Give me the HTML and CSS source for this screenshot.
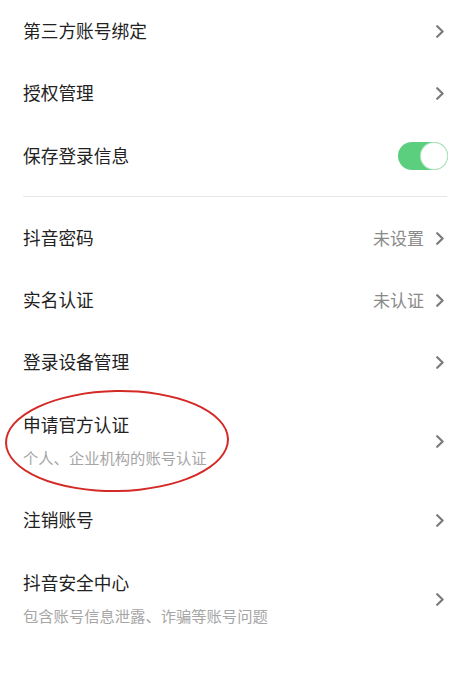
FILE: index.html
```html
<!DOCTYPE html>
<html lang="zh-CN">
<head>
<meta charset="utf-8">
<link rel="stylesheet" href="styles.css">
</head>
<body>
<div class="page">
  <div class="group first">
    <div class="row"><span class="title">第三方账号绑定</span><span class="right"><svg class="chev" viewBox="0 0 8 13"><path d="M1.2 1.2 L6.6 6.5 L1.2 11.8"/></svg></span></div>
    <div class="row"><span class="title">授权管理</span><span class="right"><svg class="chev" viewBox="0 0 8 13"><path d="M1.2 1.2 L6.6 6.5 L1.2 11.8"/></svg></span></div>
    <div class="row"><span class="title">保存登录信息</span><span class="toggle"><span class="knob"></span></span></div>
  </div>
  <div class="divider"></div>
  <div class="group second">
    <div class="row"><span class="title">抖音密码</span><span class="right"><span class="value">未设置</span><svg class="chev" viewBox="0 0 8 13"><path d="M1.2 1.2 L6.6 6.5 L1.2 11.8"/></svg></span></div>
    <div class="row"><span class="title">实名认证</span><span class="right"><span class="value">未认证</span><svg class="chev" viewBox="0 0 8 13"><path d="M1.2 1.2 L6.6 6.5 L1.2 11.8"/></svg></span></div>
    <div class="row"><span class="title">登录设备管理</span><span class="right"><svg class="chev" viewBox="0 0 8 13"><path d="M1.2 1.2 L6.6 6.5 L1.2 11.8"/></svg></span></div>
    <div class="row tall circled">
      <div class="texts"><span class="title">申请官方认证</span><span class="sub">个人、企业机构的账号认证</span></div>
      <span class="right"><svg class="chev" viewBox="0 0 8 13"><path d="M1.2 1.2 L6.6 6.5 L1.2 11.8"/></svg></span>
      <span class="ring"></span>
    </div>
    <div class="row"><span class="title">注销账号</span><span class="right"><svg class="chev" viewBox="0 0 8 13"><path d="M1.2 1.2 L6.6 6.5 L1.2 11.8"/></svg></span></div>
    <div class="row tall">
      <div class="texts"><span class="title">抖音安全中心</span><span class="sub">包含账号信息泄露、诈骗等账号问题</span></div>
      <span class="right"><svg class="chev" viewBox="0 0 8 13"><path d="M1.2 1.2 L6.6 6.5 L1.2 11.8"/></svg></span>
    </div>
  </div>
</div>
</body>
</html>
```
FILE: styles.css
```css
html, body {
  margin: 0;
  padding: 0;
  background: #ffffff;
}
body {
  font-family: "Noto Sans CJK SC", "Noto Sans", sans-serif;
  color: #222222;
  width: 472px;
  height: 700px;
  overflow: hidden;
}
.page {
  padding: 0 25px 0 23px;
  display: flex;
  flex-direction: column;
}
.group {
  display: flex;
  flex-direction: column;
}
.first {
  padding-bottom: 8px;
}
.second {
  padding-top: 11px;
}
.divider {
  height: 1px;
  background: #e6e6e6;
}
.row {
  height: 62.5px;
  display: flex;
  align-items: center;
  justify-content: space-between;
  position: relative;
}
.second .row {
  height: 62px;
}
.second .row.tall {
  height: 96px;
}
.title {
  font-size: 17.7px;
  line-height: 24px;
  color: #222222;
  padding-bottom: 3px;
}
.texts {
  display: flex;
  flex-direction: column;
  gap: 9px;
}
.texts .title {
  padding-bottom: 0;
}
.sub {
  font-size: 15.3px;
  line-height: 24px;
  color: #a6a6a6;
  padding-bottom: 2px;
}
.right {
  display: flex;
  align-items: center;
  gap: 12px;
}
.value {
  font-size: 17px;
  color: #8a8a8a;
  padding-bottom: 3px;
}
.chev {
  width: 8px;
  height: 13px;
  fill: none;
  stroke: #7a7a7a;
  stroke-width: 2.2;
  stroke-linecap: round;
  stroke-linejoin: round;
  margin-right: 3px;
}
.toggle {
  width: 50px;
  height: 28px;
  border-radius: 14px;
  background: #5ccf7e;
  display: flex;
  align-items: center;
  justify-content: flex-end;
  padding: 0 1px;
  box-sizing: border-box;
  margin-right: -1px;
}
.knob {
  width: 26px;
  height: 26px;
  border-radius: 50%;
  background: #ffffff;
  box-shadow: 0 0 0 1px #b9e6c6;
}
.ring {
  position: absolute;
  left: -18px;
  top: -4px;
  width: 220px;
  height: 98px;
  border: 2px solid #d42a26;
  border-radius: 50%;
  pointer-events: none;
  transform: rotate(-1deg);
}
```
